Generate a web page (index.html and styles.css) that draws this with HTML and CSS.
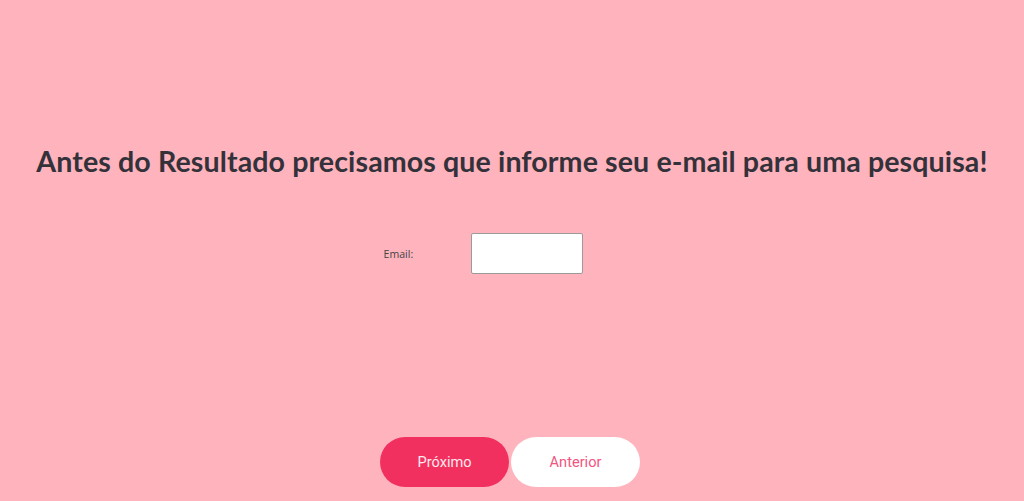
FILE: index.html
```html
<!DOCTYPE html>
<html lang="pt">
<head>
<meta charset="utf-8">
<link rel="stylesheet" href="styles.css">
</head>
<body>
<main class="page">
  <h1 class="title">Antes do Resultado precisamos que informe seu e-mail para uma pesquisa!</h1>
  <div class="field">
    <label class="label" for="email">Email:</label>
    <input class="input" id="email" type="text">
  </div>
  <div class="actions">
    <button class="btn btn-primary">Próximo</button>
    <button class="btn btn-secondary">Anterior</button>
  </div>
</main>
</body>
</html>
```
FILE: styles.css
```css
html, body {
  margin: 0;
  padding: 0;
  background: #ffb3bd;
  height: 100%;
}
.page {
  height: 501px;
  display: flex;
  flex-direction: column;
  align-items: center;
  font-family: "Lato", "Open Sans", sans-serif;
}
.title {
  margin: 143px 0 0 0;
  font-size: 28.6px;
  font-weight: 700;
  color: #33323a;
  line-height: 36px;
  letter-spacing: 0.1px;
  white-space: nowrap;
}
.field {
  margin-top: 54px;
  display: flex;
  align-items: center;
  width: 211px;
  margin-right: 46px;
}
.label {
  font-family: "Open Sans", sans-serif;
  font-size: 10.6px;
  color: #444;
  width: 87px;
  margin-top: 1px;
}
.input {
  width: 106px;
  height: 35px;
  border: 1px solid #9a9a9a;
  border-radius: 2px;
  background: #fff;
  padding: 2px;
  margin: 0;
}
.actions {
  margin-top: 163px;
  display: flex;
  gap: 2px;
  margin-right: 4px;
}
.btn {
  width: 129px;
  height: 50px;
  border-radius: 25px;
  border: none;
  font-family: "Roboto", sans-serif;
  font-size: 14.6px;
  cursor: pointer;
}
.btn-primary {
  background: #f2305f;
  color: #fde8ee;
}
.btn-secondary {
  background: #ffffff;
  color: #f2557f;
}
```
